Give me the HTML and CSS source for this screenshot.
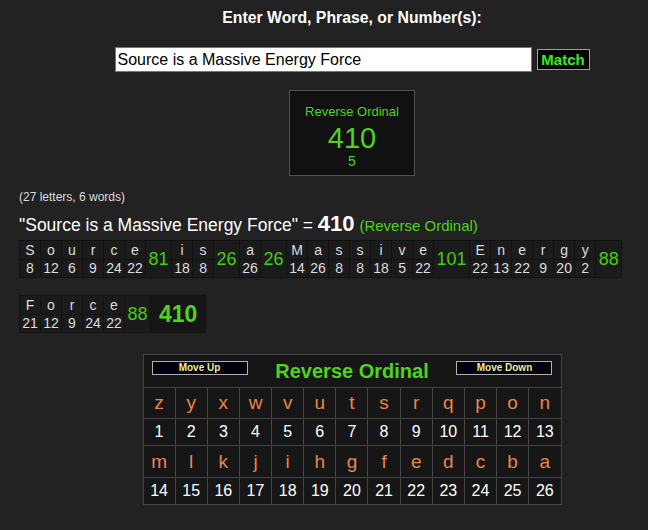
FILE: index.html
```html
<!DOCTYPE html>
<html lang="en">
<head>
<meta charset="utf-8">
<title>Reverse Ordinal</title>
<link rel="stylesheet" href="styles.css">
</head>
<body>
<div class="top">
  <h1 class="prompt">Enter Word, Phrase, or Number(s):</h1>
  <form class="entry">
    <input class="phrase" type="text" value="Source is a Massive Energy Force">
    <button class="match" type="button">Match</button>
  </form>
  <div class="result-box">
    <div class="rb-name">Reverse Ordinal</div>
    <div class="rb-value">410</div>
    <div class="rb-count">5</div>
  </div>
</div>

<div class="breakdown">
  <div class="counts">(27 letters, 6 words)</div>
  <div class="sumline">"Source is a Massive Energy Force" = <b class="total">410</b> <span class="cipher-name">(Reverse Ordinal)</span></div>
  <div class="words">
    <div class="word">
      <span class="l">S</span><span class="n">8</span>
      <span class="l">o</span><span class="n">12</span>
      <span class="l">u</span><span class="n">6</span>
      <span class="l">r</span><span class="n">9</span>
      <span class="l">c</span><span class="n">24</span>
      <span class="l">e</span><span class="n">22</span>
      <span class="sum">81</span>
    </div>
    <div class="word">
      <span class="l">i</span><span class="n">18</span>
      <span class="l">s</span><span class="n">8</span>
      <span class="sum">26</span>
    </div>
    <div class="word">
      <span class="l">a</span><span class="n">26</span>
      <span class="sum">26</span>
    </div>
    <div class="word">
      <span class="l">M</span><span class="n">14</span>
      <span class="l">a</span><span class="n">26</span>
      <span class="l">s</span><span class="n">8</span>
      <span class="l">s</span><span class="n">8</span>
      <span class="l">i</span><span class="n">18</span>
      <span class="l">v</span><span class="n">5</span>
      <span class="l">e</span><span class="n">22</span>
      <span class="sum">101</span>
    </div>
    <div class="word">
      <span class="l">E</span><span class="n">22</span>
      <span class="l">n</span><span class="n">13</span>
      <span class="l">e</span><span class="n">22</span>
      <span class="l">r</span><span class="n">9</span>
      <span class="l">g</span><span class="n">20</span>
      <span class="l">y</span><span class="n">2</span>
      <span class="sum">88</span>
    </div>
    <div class="word">
      <span class="l">F</span><span class="n">21</span>
      <span class="l">o</span><span class="n">12</span>
      <span class="l">r</span><span class="n">9</span>
      <span class="l">c</span><span class="n">24</span>
      <span class="l">e</span><span class="n">22</span>
      <span class="sum">88</span>
      <span class="sum grand">410</span>
    </div>
  </div>
</div>

<div class="chart-wrap">
  <table class="chart">
    <tr class="chart-head">
      <td colspan="13">
        <div class="head-bar">
          <button class="move" type="button">Move Up</button>
          <span class="chart-title">Reverse Ordinal</span>
          <button class="move" type="button">Move Down</button>
        </div>
      </td>
    </tr>
    <tr class="lt">
      <td>z</td><td>y</td><td>x</td><td>w</td><td>v</td><td>u</td><td>t</td><td>s</td><td>r</td><td>q</td><td>p</td><td>o</td><td>n</td>
    </tr>
    <tr class="nm">
      <td>1</td><td>2</td><td>3</td><td>4</td><td>5</td><td>6</td><td>7</td><td>8</td><td>9</td><td>10</td><td>11</td><td>12</td><td>13</td>
    </tr>
    <tr class="lt lt2">
      <td>m</td><td>l</td><td>k</td><td>j</td><td>i</td><td>h</td><td>g</td><td>f</td><td>e</td><td>d</td><td>c</td><td>b</td><td>a</td>
    </tr>
    <tr class="nm">
      <td>14</td><td>15</td><td>16</td><td>17</td><td>18</td><td>19</td><td>20</td><td>21</td><td>22</td><td>23</td><td>24</td><td>25</td><td>26</td>
    </tr>
  </table>
</div>
</body>
</html>
```

FILE: styles.css
```css
* { box-sizing: border-box; }

body {
  margin: 0;
  background: #222222;
  color: #ffffff;
  font-family: "Liberation Sans", Arial, sans-serif;
}

/* ---------- top entry ---------- */
.top {
  padding-left: 56px;
  display: flex;
  flex-direction: column;
  align-items: center;
}

.prompt {
  margin: 9px 0 0;
  font-size: 15.8px;
  line-height: 18px;
  font-weight: bold;
}

.entry {
  margin: 20px 0 0;
  display: flex;
  align-items: center;
  gap: 5px;
}

.phrase {
  width: 417px;
  height: 25px;
  margin: 0;
  padding: 0 2px;
  border: 1px solid #767676;
  background: #ffffff;
  color: #000000;
  font: 16px "Liberation Sans", Arial, sans-serif;
}

.match {
  width: 53px;
  height: 21px;
  margin: 0;
  padding: 0;
  background: #000000;
  border: 1px solid #a0a0a0;
  color: #33ee22;
  font: bold 15px "Liberation Sans", Arial, sans-serif;
  line-height: 19px;
}

.result-box {
  margin-top: 18px;
  width: 126px;
  border: 1px solid #505050;
  background: #111111;
  color: #4fd31e;
  text-align: center;
  padding: 13px 0 6px;
}

.rb-name { font-size: 13px; line-height: 16px; }
.rb-value { font-size: 29px; line-height: 30px; margin-top: 3px; }
.rb-count { font-size: 14px; line-height: 16px; }

/* ---------- breakdown ---------- */
.breakdown {
  padding-left: 19px;
}

.counts {
  margin-top: 14px;
  font-size: 12px;
  line-height: 14px;
  color: #dddddd;
}

.sumline {
  margin-top: 9px;
  font-size: 17.5px;
  line-height: 22px;
  color: #ffffff;
}

.total {
  font-size: 22px;
  font-weight: bold;
}

.cipher-name {
  font-size: 15px;
  color: #4fd31e;
}

.words {
  margin-top: 3px;
  display: flex;
  flex-wrap: wrap;
  row-gap: 17px;
}

.word {
  display: grid;
  grid-auto-flow: column;
  grid-template-rows: 18px 17px;
  gap: 1px;
  padding: 1px;
  background: #121212;
  margin-right: -1px;
}

.word .l,
.word .n {
  min-width: 20px;
  background: #1b1b1b;
  color: #dddddd;
  font-size: 14px;
  line-height: 18px;
  text-align: center;
}

.word .n { line-height: 17px; }

.word .sum {
  grid-row: 1 / 3;
  display: flex;
  align-items: center;
  justify-content: center;
  padding: 0 2.5px;
  background: #1b1b1b;
  color: #44cc11;
  font-size: 18px;
}

.word .grand {
  padding: 0 8px;
  background: #161616;
  font-size: 23px;
  font-weight: bold;
  color: #4fd31e;
}

/* ---------- cipher chart ---------- */
.chart-wrap {
  padding-left: 56px;
  margin-top: 21px;
  display: flex;
  justify-content: center;
}

.chart {
  width: 419px;
  table-layout: fixed;
  border-collapse: collapse;
  background: #161616;
}

.chart td {
  border: 1px solid #444444;
  padding: 0;
  text-align: center;
}

.chart-head td {
  height: 33px;
  padding: 4px 8px;
  vertical-align: top;
}

.head-bar {
  display: flex;
  justify-content: space-between;
  align-items: flex-start;
}

.move {
  width: 96px;
  height: 14px;
  margin: 2px 0 0;
  padding: 0;
  background: #000010;
  border: 1px solid #b0b0b0;
  color: #eeee88;
  font: bold 10px "Liberation Sans", Arial, sans-serif;
  line-height: 12px;
}

.chart-title {
  font-size: 20px;
  line-height: 24px;
  font-weight: bold;
  color: #4fd31e;
}

.chart .lt td {
  height: 31px;
  color: #e8864e;
  font-size: 19px;
}

.chart .lt2 td { height: 32px; }

.chart .nm td {
  height: 27px;
  color: #ffffff;
  font-size: 16px;
}
```
